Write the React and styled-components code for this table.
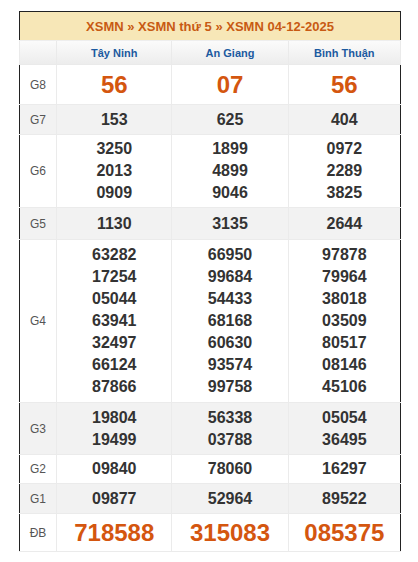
import styled, { createGlobalStyle } from "styled-components";

const GlobalStyle = createGlobalStyle`
  body {
    margin: 0;
    background: #fff;
    font-family: "Liberation Sans", Arial, sans-serif;
  }
`;

const Page = styled.div`
  padding: 11px 0 0 19px;
`;

const Board = styled.table`
  width: 382px;
  border-collapse: collapse;
  table-layout: fixed;
  border: 1px solid #222;
`;

const TitleCell = styled.th`
  height: 28px;
  padding: 0;
  background: #f7e7b7;
  color: #c85a13;
  font-size: 13px;
  font-weight: bold;
  text-align: center;
  border-bottom: 1px solid #eee;
`;

const HeadRow = styled.tr`
  background: linear-gradient(#fbfbfb, #ececec);
`;

const HeadCell = styled.th`
  height: 23px;
  padding: 0;
  color: #1c5aa0;
  font-size: 11px;
  font-weight: bold;
  text-align: center;
  border: 1px solid #eaeaea;
  border-top: none;
`;

const Row = styled.tr`
  background: ${(p) => (p.$shade ? "#f2f2f2" : "#fff")};
`;

const Label = styled.td`
  padding: 0;
  color: #555;
  font-size: 12px;
  text-align: center;
  border: 1px solid #ebebeb;
  border-left: none;
`;

const Cell = styled.td`
  height: ${(p) => p.$h}px;
  padding: 0;
  text-align: center;
  border: 1px solid #ebebeb;
  &:last-child {
    border-right: none;
  }
`;

const Num = styled.div`
  font-size: ${(p) => (p.$big ? 24 : 16)}px;
  line-height: ${(p) => (p.$big ? 28 : 22)}px;
  font-weight: bold;
  color: ${(p) => (p.$big ? "#d4560f" : "#333")};
`;

const provinces = ["Tây Ninh", "An Giang", "Bình Thuận"];

const prizes = [
  { name: "G8", h: 39, big: true, vals: [["56"], ["07"], ["56"]] },
  { name: "G7", h: 29, shade: true, vals: [["153"], ["625"], ["404"]] },
  {
    name: "G6",
    h: 72,
    vals: [
      ["3250", "2013", "0909"],
      ["1899", "4899", "9046"],
      ["0972", "2289", "3825"],
    ],
  },
  { name: "G5", h: 31, shade: true, vals: [["1130"], ["3135"], ["2644"]] },
  {
    name: "G4",
    h: 162,
    vals: [
      ["63282", "17254", "05044", "63941", "32497", "66124", "87866"],
      ["66950", "99684", "54433", "68168", "60630", "93574", "99758"],
      ["97878", "79964", "38018", "03509", "80517", "08146", "45106"],
    ],
  },
  {
    name: "G3",
    h: 51,
    shade: true,
    vals: [
      ["19804", "19499"],
      ["56338", "03788"],
      ["05054", "36495"],
    ],
  },
  { name: "G2", h: 28, vals: [["09840"], ["78060"], ["16297"]] },
  { name: "G1", h: 29, shade: true, vals: [["09877"], ["52964"], ["89522"]] },
  { name: "ĐB", h: 37, big: true, vals: [["718588"], ["315083"], ["085375"]] },
];

export default function App() {
  return (
    <>
      <GlobalStyle />
      <Page>
        <Board>
          <colgroup>
            <col style={{ width: 37 }} />
            <col style={{ width: 115 }} />
            <col style={{ width: 116 }} />
            <col style={{ width: 112 }} />
          </colgroup>
          <thead>
            <tr>
              <TitleCell colSpan={4}>
                XSMN » XSMN thứ 5 » XSMN 04-12-2025
              </TitleCell>
            </tr>
            <HeadRow>
              <HeadCell />
              {provinces.map((p) => (
                <HeadCell key={p}>{p}</HeadCell>
              ))}
            </HeadRow>
          </thead>
          <tbody>
            {prizes.map((g) => (
              <Row key={g.name} $shade={g.shade}>
                <Label>{g.name}</Label>
                {g.vals.map((list, i) => (
                  <Cell key={i} $h={g.h}>
                    {list.map((n, j) => (
                      <Num key={j} $big={g.big}>
                        {n}
                      </Num>
                    ))}
                  </Cell>
                ))}
              </Row>
            ))}
          </tbody>
        </Board>
      </Page>
    </>
  );
}
